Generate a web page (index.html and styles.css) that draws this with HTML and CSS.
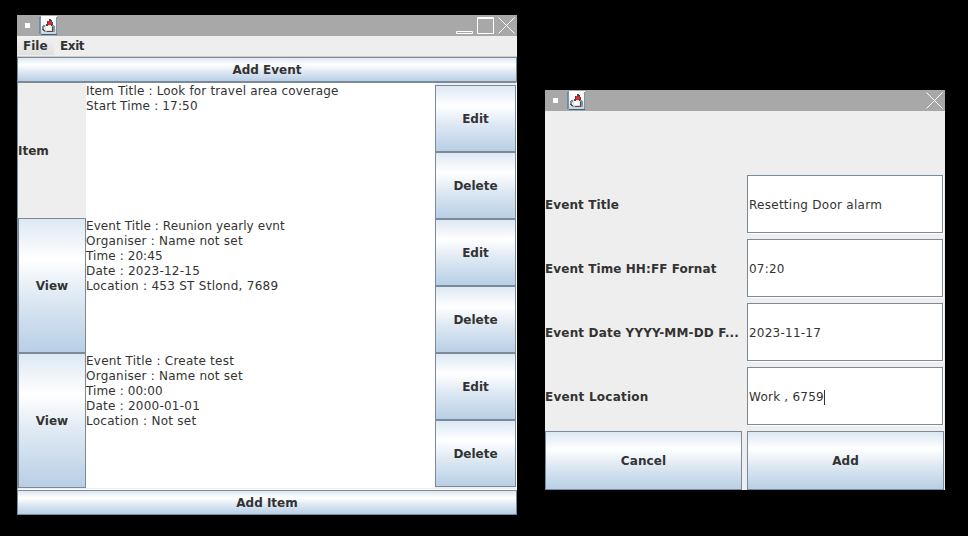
FILE: index.html
```
<!DOCTYPE html>
<html lang="en">
<head>
<meta charset="utf-8">
<title>Event Planner</title>
<link rel="stylesheet" href="styles.css">
</head>
<body>
<svg width="0" height="0" class="defs">
  <defs>
    <linearGradient id="sky" x1="0" y1="0" x2="0" y2="1"><stop offset="0" stop-color="#fff"/><stop offset=".6" stop-color="#f0f3f6"/><stop offset="1" stop-color="#c3d2de"/></linearGradient>
    <symbol id="duke" viewBox="0 0 19 19">
      <path d="M0 1h1v17H0z" fill="#708a9f"/>
      <path d="M1 0h17v18H1z" fill="url(#sky)"/>
      <path d="M1 0h1v18H1zM17 1h1v17h-1z" fill="#7297b2"/>
      <path d="M2 18h16v1H2z" fill="#3f637f"/>
      <g shape-rendering="crispEdges">
        <path d="M4 9h3v2H5v3H3v-4h1zM13 9h2v1h1v4h-2v-3h-1z" fill="#8b8b8b"/>
        <path d="M5 14h11v2H5z" fill="#9a9a9a"/>
        <path d="M6 9h7v6H6z" fill="#dedede"/>
        <path d="M7 10h5v4H7z" fill="#f8f8f8"/>
        <path d="M10 3h2v1h1v2h1v3h-1v1h-1V9H9v1H7V8h1V5h2z" fill="#4b4648"/>
        <path d="M9 5h3v1h1v2h-1v1H9z" fill="#e02631"/>
        <path d="M3 13h2v1h1v1H4v-1H3zM13 11h1v4h-1zM8 15h6v1H8z" fill="#4c4c4c"/>
      </g>
    </symbol>
  </defs>
</svg>
<main class="desktop">
  <section class="window planner">
    <header class="titlebar">
      <i class="dot"></i>
      <svg class="duke"><use href="#duke"/></svg>
      <svg class="controls" width="61" height="21" fill="none" stroke="#fff">
        <path d="M.5 16.500h16v2h-16z"/>
        <path d="M21.500 2.500h16v16h-16zM21 3.500h17"/>
        <path d="M42.500 2.500l16 16M58.500 2.500l-16 16"/>
      </svg>
    </header>
    <nav class="menubar"><span class="menu active">File</span><span class="menu tight">Exit</span></nav>
    <button class="btn bar">Add Event</button>
    <div class="scroll">
      <div class="kinds">
        <div class="kind">Item</div>
        <button class="btn">View</button>
        <button class="btn">View</button>
      </div>
      <div class="details">
        <div class="entry"><p class="t2">Item Title : Look for travel area coverage</p><p class="t2">Start Time : 17:50</p></div>
        <div class="entry"><p class="t1">Event Title : Reunion yearly evnt</p><p class="t3">Organiser : Name not set</p><p class="t1">Time : 20:45</p><p class="t3">Date : 2023-12-15</p><p class="t4">Location : 453 ST Stlond, 7689</p></div>
        <div class="entry"><p class="t3">Event Title : Create test</p><p class="t3">Organiser : Name not set</p><p class="t1">Time : 00:00</p><p class="t3">Date : 2000-01-01</p><p class="t4">Location : Not set</p></div>
      </div>
      <div class="actions">
        <button class="btn">Edit</button><button class="btn">Delete</button>
        <button class="btn">Edit</button><button class="btn">Delete</button>
        <button class="btn">Edit</button><button class="btn">Delete</button>
      </div>
    </div>
    <button class="btn bar">Add Item</button>
  </section>
  <section class="window dialog">
    <header class="titlebar">
      <i class="dot"></i>
      <svg class="duke"><use href="#duke"/></svg>
      <svg class="controls" width="19" height="21" fill="none" stroke="#fff"><path d="M.5 2.500l16 16M16.500 2.500l-16 16"/></svg>
    </header>
    <div class="form">
      <span></span><span></span>
      <label class="t1">Event Title</label><div class="field"><span class="t4">Resetting Door alarm</span></div>
      <label class="t1">Event Time HH:FF Fornat</label><div class="field"><span class="t3">07:20</span></div>
      <label class="t2">Event Date YYYY-MM-DD F...</label><div class="field"><span class="t3">2023-11-17</span></div>
      <label class="t3">Event Location</label><div class="field"><span class="t3">Work , 6759</span><i class="caret"></i></div>
      <button class="btn t1">Cancel</button><button class="btn">Add</button>
    </div>
  </section>
</main>
</body>
</html>
```
FILE: styles.css
```
* { box-sizing: border-box; }
body { margin: 0; background: #000; color: #333; font: 12px/15px "DejaVu Sans", sans-serif; }
p { margin: 0; }
.defs { position: absolute; }
.desktop { display: flex; align-items: flex-start; gap: 28px; width: 968px; height: 536px; padding: 15px 0 0 17px; overflow: hidden; }
.window { display: flex; flex-direction: column; background: #eee; }
.planner { width: 500px; height: 500px; }
.dialog { width: 400px; height: 400px; margin-top: 75px; }
.titlebar { display: flex; align-items: center; flex: none; height: 21px; background: #a8a8a8; }
.dot { width: 5px; height: 5px; margin-left: 8px; background: #fff; }
.duke { width: 19px; height: 19px; margin-left: 9px; }
.controls { margin-left: auto; }
.menubar { display: flex; height: 21px; border-bottom: 1px solid #ccc; font-weight: bold; }
.menu { padding: 3px 6px 0; white-space: nowrap; }
.menu.active { width: 37px; height: 19px; background: linear-gradient(#f2f2f2, #e0e0e0); }
.menu.tight { letter-spacing: -.4px; }
.btn { display: flex; align-items: center; justify-content: center; min-width: 0; margin: 0; padding: 2px 0 0; border: 1px solid #7a8a99; border-radius: 0; background: linear-gradient(#dde8f3, #fff 30%, #dde8f3 60%, #b8cfe5); color: #333; font: bold 12px/15px "DejaVu Sans", sans-serif; }
.bar { flex: none; height: 25px; }
.scroll { display: grid; grid-template-columns: 68px 349px 81px; height: 408px; border: 1px solid #7a8a99; border-right-color: #fff; border-bottom-color: #fff; }
.kinds, .details { display: grid; grid-template-rows: repeat(3, 135px); }
.kind { display: flex; align-items: center; padding-top: 2px; font-weight: bold; }
.details { height: 405px; background: #fff; }
.entry { padding-top: 1px; white-space: nowrap; }
.actions { display: grid; grid-template-rows: repeat(6, 67px); padding-top: 2px; }
.form { display: grid; grid-template-columns: 197px 197px; grid-template-rows: repeat(6, 59px); gap: 5px; }
.form label { display: flex; align-items: center; padding-top: 2px; font-weight: bold; white-space: nowrap; }
.field { display: flex; align-items: center; padding: 2px 0 0 1px; border: 1px solid #7a8a99; background: #fff; margin: 0 1px 1px 0; box-shadow: 1px 1px #fff; }
.caret { width: 1px; height: 15px; background: #333; }
.t1 { letter-spacing: .09px; }
.t2 { letter-spacing: .165px; }
.t3 { letter-spacing: .23px; }
.t4 { letter-spacing: .27px; }
```
